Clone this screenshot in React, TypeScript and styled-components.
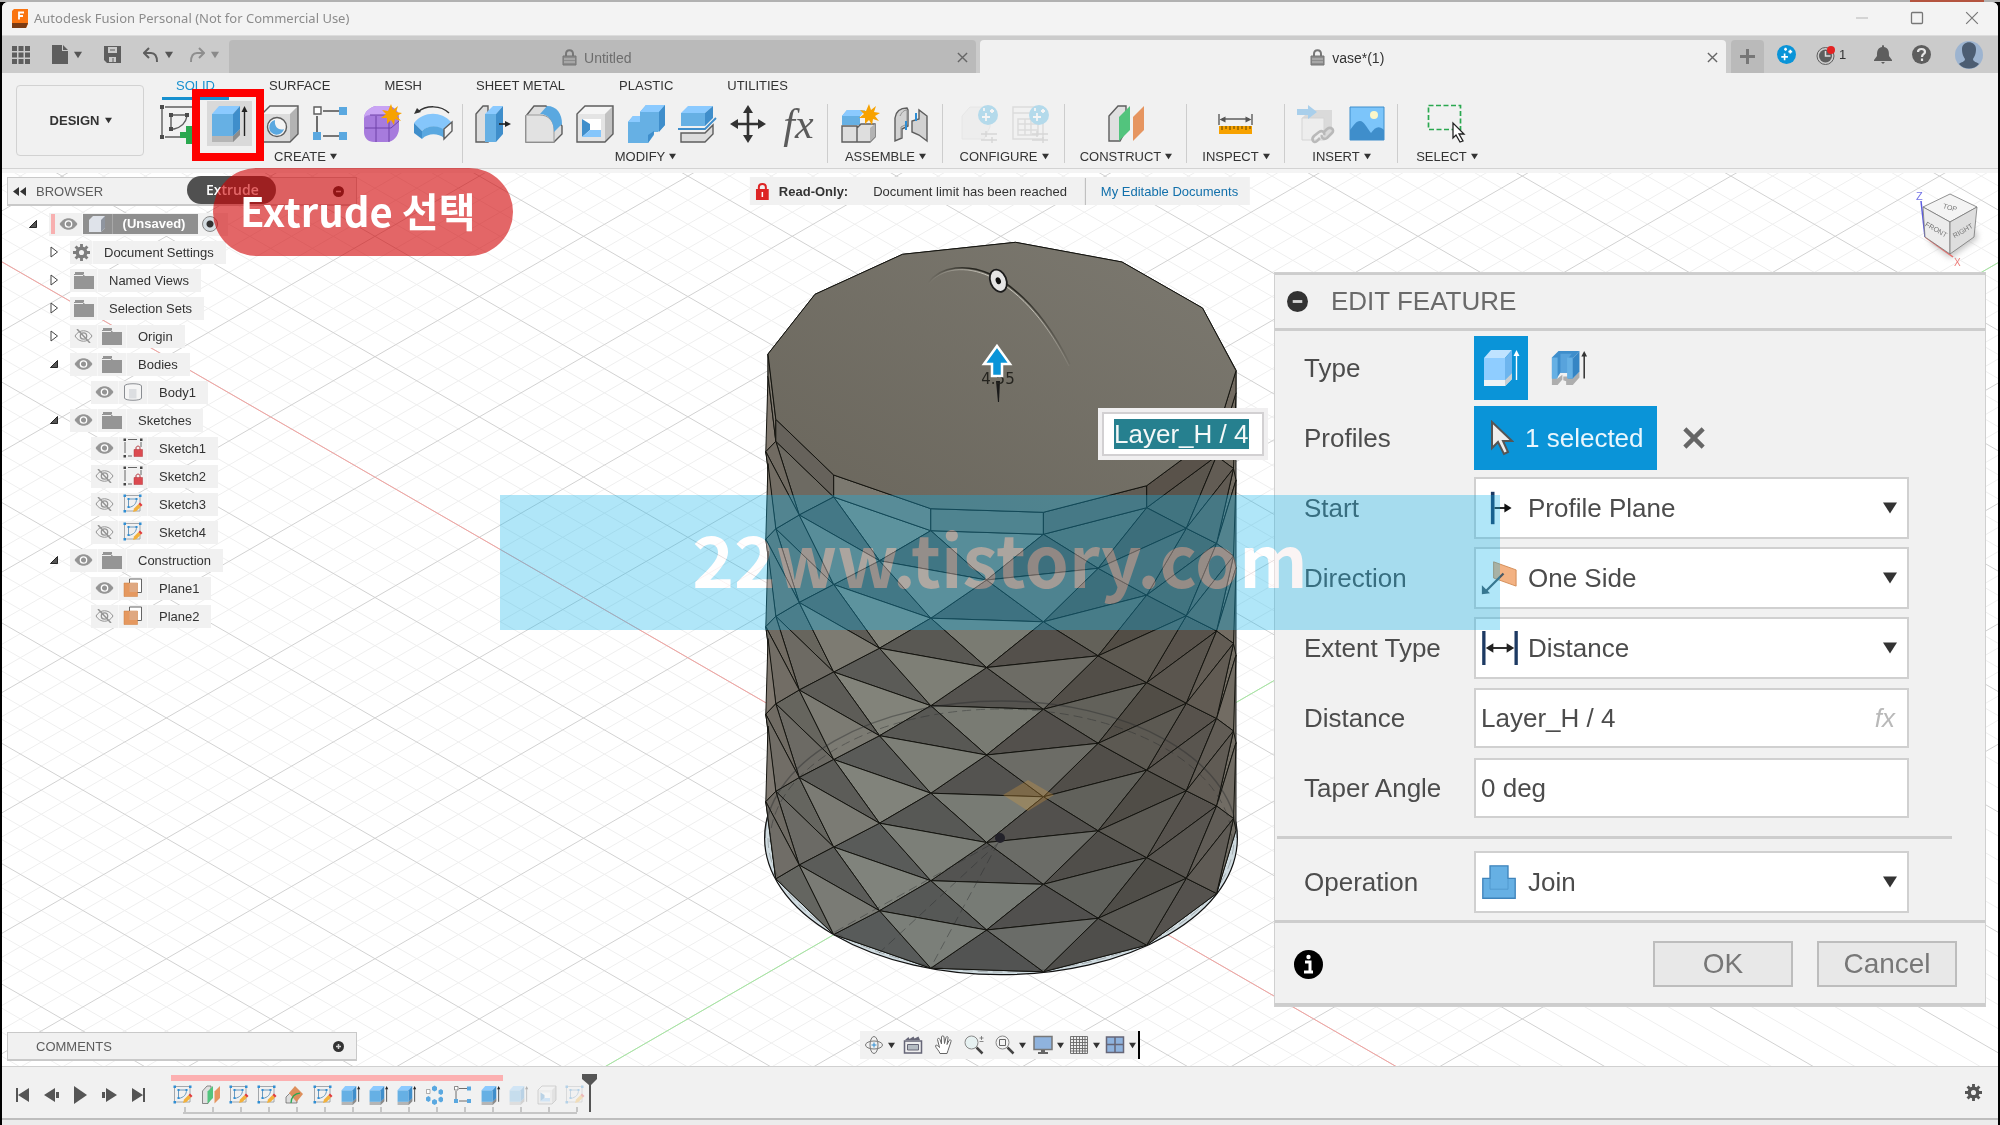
import React from "react";
import styled, { createGlobalStyle, css } from "styled-components";

const ui = `"Liberation Sans", Arial, "Noto Sans CJK KR", sans-serif`;

const GlobalStyle = createGlobalStyle`
  *, *::before, *::after { box-sizing: border-box; }
  body { margin: 0; background: #000; font-family: ${ui}; font-size: 13px; color: #333; }
  button, input, select { font: inherit; color: inherit; margin: 0; }
  button { border: 0; padding: 0; background: none; cursor: pointer; }
  svg { display: block; flex: none; }
  ul { list-style: none; margin: 0; padding: 0; }
`;

/* ---------- shell ---------- */

const Shell = styled.div`
  position: relative;
  min-height: 100vh;
  display: flex;
  flex-direction: column;
  overflow: hidden;
`;
const Backdrop = styled.div`
  height: 2px;
  display: flex;
  justify-content: flex-end;
  padding-right: 16px;
  background: #b1b1b1;
`;
const BackdropChip = styled.span`
  width: 74px;
  background: #b4543f;
`;
const Frame = styled.div`
  flex: 1;
  display: flex;
  flex-direction: column;
  margin: 0 2px;
  background: #f1f1f1;
  border-radius: 6px 6px 0 0;
`;

const TitleBar = styled.header`
  display: flex;
  align-items: center;
  height: 34px;
  padding: 0 19px 1px 10px;
  gap: 5px;
  background: #f3f3f3;
  border-bottom: 1px solid #dcdcdc;
  border-radius: 6px 6px 0 0;
`;
const AppTitle = styled.h1`
  flex: 1;
  margin: 0;
  font: 400 13px/20px "Noto Sans", sans-serif;
  color: #8c8c8c;
`;
const WindowButtons = styled.div`
  display: flex;
  gap: 41px;
`;

/* ---------- document tabs ---------- */

const TabBar = styled.div`
  display: flex;
  align-items: stretch;
  height: 37px;
  background: #cbcbcb;
`;
const QuickTools = styled.div`
  display: flex;
  align-items: center;
  width: 227px;
  padding-left: 10px;
  color: #5e5e5e;
`;
const QuickButton = styled.button<{ $w: number; $dim?: boolean }>`
  display: flex;
  align-items: center;
  gap: 6px;
  width: ${(p) => p.$w}px;
  opacity: ${(p) => (p.$dim ? 0.55 : 1)};
`;
const DocTab = styled.div<{ $active?: boolean }>`
  flex: 1;
  display: flex;
  align-items: center;
  margin-top: 4px;
  padding: 2px 8px 0;
  font-size: 14px;
  border-radius: 4px 4px 0 0;
  color: ${(p) => (p.$active ? "#333" : "#6d6d6d")};
  background: ${(p) => (p.$active ? "#f1f1f1" : "#bababa")};
  & + & { margin-left: 4px; }
`;
const DocName = styled.button`
  flex: 1;
  display: flex;
  align-items: center;
  justify-content: center;
  gap: 7px;
`;
const NewTab = styled.button`
  display: flex;
  align-items: center;
  justify-content: center;
  width: 33px;
  margin: 4px 0 0 5px;
  background: #bababa;
  border-radius: 4px 4px 0 0;
`;
const Account = styled.div`
  display: flex;
  align-items: center;
  width: 234px;
  padding-left: 13px;
`;
const AccountButton = styled.button<{ $w: number }>`
  display: flex;
  align-items: center;
  gap: 4px;
  width: ${(p) => p.$w}px;
  font-size: 13px;
`;

/* ---------- ribbon ---------- */

const Ribbon = styled.div`
  display: flex;
  height: 100px;
  padding-left: 14px;
  background: #f1f1f1;
  box-shadow: inset 0 -4px #f4f4f4, inset 0 -5px #d3d3d3;
`;
const Workspace = styled.button`
  display: flex;
  align-items: center;
  justify-content: center;
  gap: 6px;
  width: 128px;
  height: 71px;
  margin-top: 12px;
  padding-left: 2px;
  font-weight: 700;
  border: 1px solid #d2d2d2;
  border-radius: 4px;
`;
const RibbonBody = styled.div`
  display: flex;
  flex-direction: column;
`;
const RibbonTabs = styled.nav`
  display: flex;
  gap: 26px;
  margin-left: 18px;
`;
const RibbonTab = styled.button<{ $active?: boolean }>`
  height: 27px;
  padding: 0 14px;
  line-height: 26px;
  border-bottom: 3px solid ${(p) => (p.$active ? "#1790cf" : "transparent")};
  color: ${(p) => (p.$active ? "#1790cf" : "#333")};
`;
const Groups = styled.div`
  display: flex;
  padding-left: 4px;
`;
const Group = styled.section<{ $w: number }>`
  display: flex;
  flex-direction: column;
  align-items: center;
  width: ${(p) => p.$w}px;
  padding-top: 1px;
  position: relative;
  &:not(:last-child)::after {
    content: "";
    position: absolute;
    right: 0;
    top: 4px;
    width: 1px;
    height: 59px;
    background: #cdcdcd;
  }
`;
const ToolRow = styled.div`
  display: flex;
`;
const Tool = styled.button<{ $on?: boolean; $off?: boolean }>`
  display: flex;
  align-items: center;
  justify-content: center;
  width: 45px;
  height: 45px;
  margin: 0 3px;
  background: ${(p) => (p.$on ? "#d9d9d9" : "transparent")};
  opacity: ${(p) => (p.$off ? 0.3 : 1)};
`;
const GroupMenu = styled.button`
  display: flex;
  align-items: center;
  gap: 4px;
  height: 20px;
`;

/* ---------- canvas ---------- */

const Canvas = styled.main`
  position: relative;
  flex: 1;
  display: flex;
  flex-direction: column;
  justify-content: space-between;
  min-height: 892px;
  padding: 4px 0 5px 5px;
  background: #fff;
  overflow: hidden;
`;
const Scene = styled.svg`
  position: absolute;
  inset: 0;
  width: 100%;
  height: 100%;
`;
const SideColumn = styled.aside`
  position: relative;
  width: 350px;
`;
const SideBar = styled.div`
  position: relative;
  display: flex;
  align-items: center;
  width: 350px;
  height: 29px;
  padding: 0 12px 0 5px;
  gap: 10px;
  background: #f1f1f1;
  border: 1px solid #c9c9c9;
  border-bottom-width: 2px;
  color: #5c5c5c;
`;
const SideTitle = styled.h2<{ $indent?: boolean }>`
  flex: 1;
  margin: 0;
  padding-left: ${(p) => (p.$indent ? 23 : 0)}px;
  font-size: 13px;
  font-weight: 400;
`;
const Tree = styled.ul`
  display: flex;
  flex-direction: column;
  gap: 4px;
  margin-top: 6px;
`;
const Node = styled.li<{ $level: number }>`
  display: flex;
  align-items: center;
  height: 24px;
  padding-left: ${(p) => [19, 40, 84][p.$level]}px;
`;
const Twisty = styled.button`
  width: 23px;
  padding-left: 3px;
`;
const NodeBody = styled.div<{ $root?: boolean }>`
  display: flex;
  align-items: center;
  height: 23px;
  background: #f1f1f1;
  ${(p) => p.$root && css`width: 179px; padding-left: 2px;`}
`;
const Cell = styled.span<{ $w?: number }>`
  display: flex;
  align-items: center;
  justify-content: center;
  width: ${(p) => p.$w ?? 28}px;
  height: 100%;
  border-right: 1px solid #f8f8f8;
`;
const NodeName = styled.button`
  padding: 0 12px 0 11px;
  white-space: nowrap;
`;
const RootName = styled.button`
  display: flex;
  align-items: center;
  width: 115px;
  height: 20px;
  background: #8f8f8f;
  color: #fff;
  font-weight: 700;
`;
const RootLabel = styled.span`
  flex: 1;
  line-height: 20px;
  padding-right: 3px;
  margin-left: 4px;
  border-left: 1px solid #a8a8a8;
`;
const RedMark = styled.span`
  width: 4px;
  height: 20px;
  background: #f8b0b0;
`;
const ActiveRadio = styled.input`
  appearance: none;
  width: 16px;
  height: 16px;
  margin-left: 4px !important;
  border: 1px solid #888;
  border-radius: 50%;
  background: radial-gradient(circle, #333 0 3px, #d5dde2 4px);
`;
const Notice = styled.div`
  position: absolute;
  top: 4px;
  left: 50%;
  transform: translateX(-50%);
  display: flex;
  align-items: center;
  height: 28px;
  padding: 0 12px 0 6px;
  background: #f1f1f1;
  white-space: nowrap;
`;
const NoticeTitle = styled.strong`
  margin: 0 25px 0 10px;
`;
const NoticeLink = styled.a`
  margin-left: 18px;
  padding-left: 15px;
  line-height: 27px;
  border-left: 1px solid #b8b8b8;
  color: #1270ab;
  text-decoration: none;
`;
const DimensionBox = styled.label`
  position: absolute;
  left: 1096px;
  top: 235px;
  padding: 4px;
  background: #f0eff0;
`;
const DimensionInner = styled.span`
  display: flex;
  padding: 5px 13px 5px 10px;
  border: 2px solid #d2d0d2;
  background: #fff;
`;
const DimensionInput = styled.input`
  width: 135px;
  height: 30px;
  padding: 0;
  border: 0;
  background: #26808f;
  color: #f4f8f8;
  font-size: 26px;
`;
const NavBar = styled.div`
  position: absolute;
  left: 50%;
  bottom: 7px;
  transform: translateX(-50%);
  display: flex;
  align-items: center;
  height: 28px;
  padding-left: 4px;
  background: #f1f1f1;
  border-right: 2px solid #000;
`;
const NavButton = styled.button<{ $w: number }>`
  display: flex;
  align-items: center;
  gap: 4px;
  width: ${(p) => p.$w}px;
`;
const CubeBox = styled.div`
  position: absolute;
  top: 12px;
  right: 12px;
`;

/* ---------- feature dialog ---------- */

const Dialog = styled.form`
  position: absolute;
  top: 99px;
  right: 12px;
  width: 712px;
  color: #4c4c4c;
  font-size: 26px;
  background: #f1f1f1;
  border: 1px solid #d0d0d0;
`;
const DialogHead = styled.div`
  display: flex;
  align-items: center;
  gap: 23px;
  height: 58px;
  padding: 0 12px;
  border-top: 2px solid #cdcdcd;
  border-bottom: 3px solid #cdcdcd;
  color: #6a6a6a;
`;
const DialogTitle = styled.h2`
  margin: 0;
  font-size: 26px;
  font-weight: 400;
`;
const Fields = styled.div`
  display: grid;
  grid-template-columns: 170px minmax(0, 1fr);
  grid-auto-rows: 64px;
  row-gap: 6px;
  align-items: center;
  padding: 5px 76px 4px 29px;
`;
const FieldName = styled.label`
  white-space: nowrap;
`;
const Control = styled.div`
  position: relative;
  display: flex;
  align-items: center;
`;
const ControlIcon = styled.span`
  position: absolute;
  left: 7px;
  pointer-events: none;
`;
const ControlCaret = styled.span`
  position: absolute;
  right: 12px;
  pointer-events: none;
`;
const Select = styled.select`
  appearance: none;
  width: 100%;
  height: 62px;
  padding: 0 40px 0 52px;
  border: 2px solid #d0d0d0;
  border-radius: 0;
  background: #fff;
`;
const TextField = styled.input`
  width: 100%;
  height: 60px;
  padding: 0 5px;
  border: 2px solid #d0d0d0;
  background: #fff;
`;
const Fx = styled.em`
  position: absolute;
  right: 14px;
  color: #b9b9b9;
  pointer-events: none;
`;
const TypeButton = styled.button<{ $on?: boolean }>`
  display: flex;
  align-items: center;
  justify-content: center;
  width: 54px;
  height: 64px;
  margin-right: 14px;
  background: ${(p) => (p.$on ? "#0a94d8" : "transparent")};
`;
const PickButton = styled.button`
  display: flex;
  align-items: center;
  gap: 11px;
  width: 183px;
  height: 64px;
  padding-left: 16px;
  background: #0a94d8;
  color: #e9f6fd;
`;
const ClearButton = styled.button`
  margin-left: 26px;
`;
const Rule = styled.hr`
  grid-column: 1 / -1;
  width: 675px;
  height: 3px;
  margin: 12px 0 0 -27px;
  border: 0;
  background: #cdcdcd;
`;
const Operation = styled(Fields)`
  grid-auto-rows: auto;
  row-gap: 12px;
  padding-top: 0;
  padding-bottom: 7px;
`;
const DialogFoot = styled.div`
  display: flex;
  align-items: center;
  gap: 24px;
  height: 86px;
  padding: 2px 28px 0 19px;
  border-top: 3px solid #cdcdcd;
  border-bottom: 3px solid #cdcdcd;
`;
const Spacer = styled.span`
  flex: 1;
`;
const DialogButton = styled.button`
  width: 140px;
  height: 46px;
  border: 2px solid #bdbdbd;
  background: #e8e8e8;
  color: #777;
  font-size: 28px;
`;

/* ---------- timeline ---------- */

const Timeline = styled.footer`
  display: flex;
  align-items: center;
  height: 52px;
  padding: 0 16px 0 13px;
  border-top: 1px solid #d0d0d0;
  background: #f1f1f1;
`;
const Playback = styled.div`
  display: flex;
  align-items: center;
  gap: 13px;
  width: 156px;
  padding-top: 4px;
`;
const Track = styled.div`
  display: flex;
  flex-direction: column;
  margin-top: 4px;
`;
const Computed = styled.div`
  width: 332px;
  height: 6px;
  background: #fcb0b1;
`;
const Steps = styled.div`
  display: flex;
  padding-top: 4px;
`;
const Step = styled.button<{ $off?: boolean }>`
  display: flex;
  flex-direction: column;
  align-items: center;
  justify-content: space-between;
  width: 28px;
  height: 27px;
  padding-right: 5px;
  svg { opacity: ${(p) => (p.$off ? 0.3 : 1)}; }
  &::after {
    content: "";
    width: 2px;
    height: 5px;
    margin-left: 4px;
    background: #c6c6c6;
  }
`;
const Rail = styled.div`
  width: 394px;
  height: 2px;
  margin-left: 12px;
  background: #c6c6c6;
`;
const Marker = styled.svg`
  margin-left: -9px;
`;
const Bottom = styled.div`
  height: 7px;
  border-top: 2px solid #bdbdbd;
  background: #ececec;
`;

/* ---------- tutorial annotations ---------- */

const RedFrame = styled.div`
  position: absolute;
  left: 192px;
  top: 89px;
  width: 72px;
  height: 72px;
  border: 8px solid #fe0000;
  pointer-events: none;
`;
const Tooltip = styled.div`
  position: absolute;
  left: 187px;
  top: 176px;
  width: 89px;
  height: 28px;
  padding-left: 19px;
  border-radius: 14px;
  background: #505050;
  color: #fff;
  font: 600 14px/28px "Open Sans", sans-serif;
`;
const Callout = styled.div`
  position: absolute;
  left: 213px;
  top: 168px;
  width: 300px;
  height: 88px;
  padding-left: 27px;
  border-radius: 44px;
  background: rgba(208, 0, 2, 0.6);
  color: #fff;
  font: 700 40px/84px "Noto Sans CJK KR", sans-serif;
`;
const Watermark = styled.div`
  position: absolute;
  left: 25%;
  top: 44%;
  width: 50%;
  height: 12%;
  display: flex;
  align-items: center;
  justify-content: center;
  padding-bottom: 12px;
  background: rgba(15, 179, 233, 0.33);
  pointer-events: none;
`;
const WatermarkText = styled.span`
  font: 700 71px/100px "Noto Sans CJK KR", sans-serif;
  color: rgb(84, 24, 6);
  mix-blend-mode: plus-lighter;
`;

/* ---------- icons ---------- */

const Caret = ({ s = 7, c = "#333" }: { s?: number; c?: string }) => (
  <svg width={s} height={s} viewBox="0 0 10 10"><path d="M0 1h10L5 9z" fill={c} /></svg>
);

const I = ({ s = 40, children }: { s?: number; children: React.ReactNode }) => (
  <svg width={s} height={s} viewBox="0 0 40 40" fill="none">{children}</svg>
);

const ln = { stroke: "#5d5d5d", strokeWidth: 1.4 };

const Extrude = ({ s, light }: { s?: number; light?: boolean }) => (
  <I s={s}>
    <path d="M3 32h21l7-7v6l-7 7H3z" fill={light ? "#eef2f5" : "#b5b5b5"} />
    <path d="M24 32l7-7v6l-7 7z" fill={light ? "#c9ced2" : "#8c8c8c"} />
    <path d="M3 10h21v22H3z" fill={light ? "#8fcdff" : "#66b0e4"} />
    <path d="M3 10l7-8h21l-7 8z" fill={light ? "#bfe3ff" : "#8bcaff"} />
    <path d="M24 10l7-8v23l-7 7z" fill={light ? "#6db5ee" : "#3f8ecb"} />
    <path d="M35.500 6v26" stroke={light ? "#fff" : "#222"} strokeWidth="1.400" />
    <path d="M35.500 2l3 6h-6z" fill={light ? "#fff" : "#222"} />
  </I>
);
const ThinExtrude = () => (
  <I s={38}>
    <path d="M2 31h6l5-4v5l-5 6H2zM14 29h10v9h-7v-4l-3-1zM24 31l7-7v6l-7 8z" fill="#aeaeae" />
    <path d="M2 9l7-7h22l-7 8v21h-5v-6h-8l-4 6H2z" fill="#3f8ecb" />
    <path d="M11 5h12l-4 5v15h-8z" fill="#58a3dc" />
    <path d="M2 9h6v22H2z" fill="#66b0e4" /><path d="M18 9h6v22h-6z" fill="#66b0e4" /><path d="M24 10l7-8v22l-7 7z" fill="#3585c4" />
    <path d="M36 6v25" stroke="#333" strokeWidth="1.600" /><path d="M36 2l3 6h-6z" fill="#333" />
  </I>
);
const SketchNew = () => (
  <I>
    <path d="M4 5v28M7 3h29M7 33h18" {...ln} />
    <path d="M13 11h16M13 13v12h3c8-2 12-7 13-13" {...ln} />
    <path d="M2 1h4v4H2zM2 31h4v4H2zM11 9h4v4h-4zM11 23h4v4h-4zM27 9h4v4h-4z" fill="#4b4b4b" />
    <path d="M28 22h6v6h6v6h-6v6h-6v-6h-6v-6h6z" fill="#2aa84f" />
  </I>
);
const Hole = () => (
  <I>
    <path d="M2 10h28v28H2z" fill="#dcdcdc" /><path d="M2 10l8-8h28l-8 8z" fill="#f4f4f4" /><path d="M30 10l8-8v28l-8 8z" fill="#b3b3b3" />
    <path d="M2 10l8-8h28v28l-8 8H2z" {...ln} />
    <circle cx="17" cy="23" r="9.500" fill="#f4f4f4" {...ln} />
    <path d="M15 16a7.500 7.500 0 1 0 9 9c-5 2-10-2-9-9z" fill="#5aa8e0" />
  </I>
);
const RectPattern = ({ s }: { s?: number }) => (
  <I s={s}>
    <path d="M6 12v16M12 7h16M12 32h16" stroke="#4d4d4d" strokeWidth="1.600" />
    <path d="M3 3h7v7H3z" fill="#fff" {...ln} />
    <path d="M28 3h8v8h-8zM2 28h8v8H2zM28 28h8v8h-8z" fill="#5aa8e0" />
  </I>
);
const Star = () => (
  <path d="M29 0l2 6 5-4-2 6 6 1-5 3 4 5-6-2-1 6-3-5-4 4v-6l-6 0 5-4-4-4 6 1z" fill="#f7a200" />
);
const Form = () => (
  <I>
    <path d="M2 14c0-6 6-11 12-12h12c7 1 11 5 11 12v10c0 8-6 14-12 14H12C6 38 2 34 2 28z" fill="#a77bdd" />
    <path d="M2 14c0-6 6-11 12-12h12c3 1 3 5 0 9H9c-4 0-6 1-7 3z" fill="#c9a4f4" />
    <path d="M3 24h26l8-7M14 12v26M27 11v27M8 11h20l6-5" stroke="#6f43a8" strokeWidth="1" />
    <Star />
  </I>
);
const Sweep = () => (
  <I>
    <path d="M5 8C13 1 28 1 36 9" stroke="#333" strokeWidth="1.500" /><path d="M1 10l3-6 4 4z" fill="#333" />
    <path d="M1 19c10-12 27-12 37-1l-6 9c-7-6-17-6-23 0z" fill="#85c6fb" />
    <path d="M1 19l8 8v8L1 29z" fill="#3f8ecb" /><path d="M9 27c6-6 16-6 22-1v8c-6-5-16-5-22 1z" fill="#5aa8e0" />
    <path d="M31 25l8-7v9l-8 8z" fill="#f3f3f3" {...ln} />
  </I>
);
const PressPull = () => (
  <I>
    <path d="M3 10l7-8h5v36H3z" fill="#dedede" {...ln} />
    <path d="M12 10h11v28H12z" fill="#66b0e4" /><path d="M12 10l8-8h10l-7 8z" fill="#8bcaff" /><path d="M23 10l7-8v28l-7 8z" fill="#3f8ecb" />
    <path d="M26 20h9" stroke="#222" strokeWidth="1.600" /><path d="M38 20l-6-3v6z" fill="#222" />
  </I>
);
const Fillet = () => (
  <I>
    <path d="M2 12l8-10h12l16 20v8l-8 8H2z" fill="#dedede" {...ln} />
    <path d="M2 11h14c8 0 14 6 14 14v13H2z" fill="#e2e2e2" stroke="#9a9a9a" />
    <path d="M16 10l7-8c10 0 15 8 15 18l-8 8c0-10-5-18-14-18z" fill="#5aa8e0" />
  </I>
);
const ShellIcon = ({ s }: { s?: number }) => (
  <I s={s}>
    <path d="M2 10h28v28H2z" fill="#e4e4e4" /><path d="M2 10l8-8h28l-8 8z" fill="#f5f5f5" /><path d="M30 10l8-8v28l-8 8z" fill="#c2c2c2" />
    <path d="M2 10l8-8h28v28l-8 8H2z" {...ln} />
    <path d="M7 15h19v18H7z" fill="#fff" /><path d="M7 15l8 5v6l-8 7z" fill="#3f8ecb" /><path d="M7 33l8-7h11v7z" fill="#85c6fb" />
  </I>
);
const Combine = () => (
  <I>
    <path d="M2 18l5-6h7v-4l6-7h19v20l-7 7h-4v3l-6 8H2z" fill="#66b0e4" />
    <path d="M14 8l6-7h19l-6 7zM2 18l5-6h7v6z" fill="#8bcaff" />
    <path d="M33 8l6-7v20l-6 7zM22 31l6-4v3l-6 9z" fill="#3f8ecb" />
  </I>
);
const Split = () => (
  <I>
    <path d="M4 9h24v13H4z" fill="#66b0e4" /><path d="M4 9l7-7h25l-8 7z" fill="#8bcaff" /><path d="M28 9l8-7v12l-8 8z" fill="#3f8ecb" />
    <path d="M1 25h27l11-11" stroke="#3f8ecb" strokeWidth="1.800" />
    <path d="M4 29h24l8-8v9l-8 8H4z" fill="#dcdcdc" {...ln} />
  </I>
);
const Move = () => (
  <I>
    <path d="M20 6v28M6 20h28" stroke="#333" strokeWidth="2.600" />
    <path d="M20 1l5 8H15zM20 39l5-8H15zM2 20l8-5v10zM38 20l-8-5v10z" fill="#333" />
  </I>
);
const FxLabel = styled.span`
  font: italic 400 42px/40px "Liberation Serif", serif;
  color: #5b5b5b;
`;
const NewComponent = () => (
  <I>
    <path d="M2 12l5-6h18l-5 6v9H2z" fill="#66b0e4" /><path d="M2 12l5-6h18l-5 6z" fill="#8bcaff" />
    <path d="M2 22h15v16H2zM17 24l4-4h14v13l-5 5H17z" fill="#dedede" {...ln} /><path d="M30 24l5-4v13l-5 5z" fill="#b3b3b3" />
    <Star />
  </I>
);
const Joint = () => (
  <I>
    <path d="M4 14c1-7 6-10 12-10l1 2v16l-6 3v9l-7 3z" fill="#d2d2d2" {...ln} />
    <path d="M9 12c2-4 4-6 7-6v14l-6 3v11" stroke="#909090" />
    <path d="M36 37l-8-6-7-3V17l7-2V6l8 6z" fill="#d2d2d2" {...ln} />
    <path d="M15 17v9M25 9v8" stroke="#2f8ed4" strokeWidth="2" />
  </I>
);
const ConfigIcon = ({ grid }: { grid?: boolean }) => (
  <I>
    {grid ? <path d="M3 3h30v32H3zM3 9h30M8 15h20v16H8zM8 20h20M8 26h20M15 15v16M21 15v16" stroke="#aaa" strokeWidth="1.400" /> : <path d="M3 12l8-9h20v20l-6 12H3z" fill="#e6e6e6" stroke="#ccc" />}
    <circle cx="29" cy="11" r="10" fill="#2aa6e0" />
    <path d="M27 9v8M23 13h8M33 5v4M31 7h4M25 4v3" stroke="#fff" strokeWidth="1.800" />
    <path d="M22 30h16M22 36h16M27 27v6M33 33v6" stroke="#999" strokeWidth="1.400" />
  </I>
);
const Planes = ({ s }: { s?: number }) => (
  <I s={s}>
    <path d="M3 12l9-10h8v24l-6 11H3z" fill="#e0e0e0" {...ln} />
    <path d="M13 13l11-11v24L13 37z" fill="#52c47d" /><path d="M27 13L38 2v24L27 37z" fill="#e69560" />
  </I>
);
const Measure = () => (
  <I>
    <path d="M3 10v11M36 10v11M6 15h27" {...ln} /><path d="M3.500 15.500l6-3v6zM35.500 15.500l-6-3v6z" fill="#555" />
    <path d="M3 22h33v8H3z" fill="#f7a200" /><path d="M6 22v4M10 22v3M14 22v4M18 22v3M22 22v4M26 22v3M30 22v4M34 22v3" stroke="#5d4300" />
  </I>
);
const InsertLink = () => (
  <I>
    <path d="M6 14l8-8h22v22l-6 8H6z" fill="#dadada" /><path d="M6 14h22v22H6z" fill="#ededed" stroke="#d5d5d5" />
    <path d="M1 5h11V1l9 7-9 7v-4H1z" fill="#a9cfeb" />
    <path d="M24 34l-3 3c-4 3-6-2-3-5l5-4c3-2 6 0 5 3M27 29l4-4c4-3 8 1 5 4l-5 5c-3 2-6 0-5-3" stroke="#b9b9b9" strokeWidth="2.600" />
  </I>
);
const Picture = () => (
  <I>
    <path d="M3 3h34v33H3z" fill="#7cc5fa" stroke="#3f8ecb" /><circle cx="27" cy="11" r="4" fill="#fcf7c8" />
    <path d="M3 26c4-5 6-9 10-9s7 7 11 12c4-6 8-8 13-3v10H3z" fill="#3f8ecb" />
  </I>
);
const SelectIcon = () => (
  <I>
    <path d="M1.500 1.500h32v24h-32z" stroke="#2aa84f" strokeWidth="1.700" strokeDasharray="5 2.500" />
    <path d="M26 19v15l3-3 4 7 3-1-4-7h5z" fill="#fff" stroke="#222" strokeWidth="1.300" />
  </I>
);
const SketchEdit = ({ s = 20 }: { s?: number }) => (
  <I s={s}>
    <path d="M3 3h31v31H3z" stroke="#9a9ea3" strokeWidth="1.800" />
    <path d="M11 10h16c0 9-5 15-16 17z" stroke="#5b8fb8" strokeWidth="1.800" />
    <path d="M1 1h5v5H1zM32 1h5v5h-5zM1 32h5v5H1zM9 8h4v4H9zM9 24h4v4H9zM25 8h4v4h-4z" fill="#2f8ed4" />
    <path d="M20 36l2-7 9-9 5 5-9 9z" fill="#f3b13c" /><path d="M31 20l3-3 5 5-3 3z" fill="#e23b3b" />
  </I>
);
const SketchLocked = () => (
  <I s={20}>
    <path d="M4 8v22M10 3h18M36 8v10M10 36h8" stroke="#666" strokeWidth="2" />
    <path d="M1 1h5v5H1zM34 1h5v5h-5zM1 34h5v5H1z" fill="#444" />
    <path d="M26 24v-4c0-5 8-5 8 0v4" stroke="#b3343a" strokeWidth="2" /><path d="M22 23h17v14H22z" fill="#dc4a50" stroke="#b3343a" />
  </I>
);
const PlaneIcon = () => (
  <I s={20}><path d="M13 2h24v27H26V13H13z" fill="#fff" stroke="#666" strokeWidth="2" /><path d="M2 10h27v27H2z" fill="#e5985f" stroke="#cf7c3d" /><path d="M13 10h16v18H13z" fill="#dfa881" /></I>
);
const BodyIcon = () => (
  <I s={20}><path d="M3 8c0-6 34-6 34 0v24c0 6-34 6-34 0z" fill="#f5f5f5" stroke="#8a8d92" strokeWidth="2" /><path d="M12 14h15v19H12z" fill="#dcdee1" /></I>
);
const Folder = () => (
  <svg width="20" height="17" viewBox="0 0 20 17"><path d="M0 2h9l2 2h9v13H0z" fill="#959595" /><path d="M1 0h9v2H1z" fill="#959595" /><path d="M0 3.500h9" stroke="#f1f1f1" /></svg>
);
const Gear = ({ s = 17, c = "#7d7d7d" }: { s?: number; c?: string }) => (
  <svg width={s} height={s} viewBox="0 0 20 20">
    <circle cx="10" cy="10" r="5" fill="none" stroke={c} strokeWidth="4" />
    <path d="M10 0v4M10 16v4M0 10h4M16 10h4M3 3l3 3M14 14l3 3M17 3l-3 3M6 14l-3 3" stroke={c} strokeWidth="3.400" />
  </svg>
);
const Eye = ({ off }: { off?: boolean }) => (
  <svg width="19" height="14" viewBox="0 0 19 14">
    <path d="M1 7c4-7 13-7 17 0-4 7-13 7-17 0z" fill={off ? "none" : "#949494"} stroke="#949494" />
    <circle cx="9.500" cy="7" r="3.200" fill={off ? "none" : "#949494"} stroke={off ? "#949494" : "#fff"} strokeWidth="1.300" />
    {off && <path d="M3 0l13 14" stroke="#949494" strokeWidth="1.500" />}
  </svg>
);
const Open = () => <svg width="8" height="8" viewBox="0 0 9 9"><path d="M8.500.500v8h-8z" fill="#555" stroke="#111" /></svg>;
const Closed = () => <svg width="9" height="12" viewBox="0 0 9 12"><path d="M1 1l6.500 5L1 11z" fill="#fff" stroke="#444" /></svg>;
const Disc = ({ s = 11, plus }: { s?: number; plus?: boolean }) => (
  <svg width={s} height={s} viewBox="0 0 22 22">
    <circle cx="11" cy="11" r="11" fill="#333" /><path d="M6 11h10" stroke="#d5d5d5" strokeWidth="3" />{plus && <path d="M11 6v10" stroke="#d5d5d5" strokeWidth="3" />}
  </svg>
);
const Lock = () => (
  <svg width="15" height="17" viewBox="0 0 15 17"><path d="M4 8V5c0-5 7-5 7 0v3" fill="none" stroke="#777" strokeWidth="2" /><path d="M1 7h13v9H1z" fill="#8c8c8c" stroke="#747474" /><path d="M2 10h11M2 13h11" stroke="#c2c2c2" /></svg>
);
const RedLock = () => (
  <svg width="13" height="17" viewBox="0 0 13 17"><path d="M3 7V4c0-4 7-4 7 0v3" fill="none" stroke="#dd2525" strokeWidth="2" /><path d="M0 6h13v11H0z" fill="#dd2525" /><path d="M6.500 9v5" stroke="#fff" strokeWidth="1.500" /></svg>
);
const Cross = ({ s, w = 2, c = "#666" }: { s: number; w?: number; c?: string }) => (
  <svg width={s} height={s} viewBox="0 0 12 12"><path d="M1 1l10 10M11 1L1 11" stroke={c} strokeWidth={w} /></svg>
);
const Cursor = () => (
  <svg width="24" height="36" viewBox="0 0 24 36"><path d="M2 2v26l6-6 6 12 4-2-5-11h9z" fill="#eee" stroke="#555" strokeWidth="2" /></svg>
);
const AppLogo = () => (
  <svg width="17" height="19" viewBox="0 0 17 19"><path d="M2 0h14v15l-2 4H0V2z" fill="#fa7410" /><path d="M0 14h16l-2 5H0z" fill="#7b3a12" /><path d="M7 10.500V3.500h5M7 7h4" fill="none" stroke="#fff" strokeWidth="1.800" /></svg>
);

/* ---------- model ---------- */

type P = [number, number];
const RING = 87.5;
const rimA: P[] = [[768, 354], [775.8, 419.3], [833.7, 475], [930.8, 508.7], [1043.4, 512.3], [1146.7, 485.7], [1216.6, 434], [1236, 370.7]];
const backRim: P[] = [[1202.5, 308], [1122, 262], [1015.5, 242.3], [902.5, 254.3], [815, 294.3]];
const colB: P[] = [[765.8, 451.7], [799.2, 515], [879.5, 560.7], [986.6, 580], [1098.1, 568.3], [1186.3, 528.3], [1233.5, 468.5]];
const a = (i: number, k: number): P => [rimA[i][0], rimA[i][1] + 22 + RING * k];
const b = (i: number, k: number): P => [colB[i][0], colB[i][1] + RING * k];

const lightStops: [number, number[]][] = [[770, [130, 122, 112]], [785, [108, 103, 95]], [812, [110, 108, 100]], [850, [132, 131, 121]], [880, [131, 131, 121]], [985, [123, 123, 114]], [1040, [110, 109, 101]], [1100, [98, 96, 88]], [1160, [91, 87, 78]], [1205, [90, 84, 76]], [1232, [118, 111, 101]]];
const darkStops: [number, number[]][] = [[768, [134, 127, 117]], [782, [110, 104, 95]], [800, [104, 102, 94]], [835, [94, 92, 86]], [900, [91, 91, 86]], [985, [86, 83, 78]], [1100, [83, 78, 71]], [1160, [81, 76, 68]], [1210, [96, 90, 82]], [1232, [120, 113, 103]]];

const shade = (stops: [number, number[]][], x: number, y: number) => {
  let j = 1;
  while (j < stops.length - 1 && stops[j][0] < x) j++;
  const [x0, c0] = stops[j - 1];
  const [x1, c1] = stops[j];
  const t = Math.min(1, Math.max(0, (x - x0) / (x1 - x0)));
  const g = Math.max(0, (y - 620) / 350) * 4;
  const shift = [-g, 0, g];
  return `rgb(${c0.map((v, n) => Math.round(v + (c1[n] - v) * t + shift[n])).join(",")})`;
};
const pts = (p: P[]) => p.map((q) => q.join(",")).join(" ");

const faces: { p: P[]; light: boolean }[] = [];
for (let k = 0; k < 5; k++) {
  for (let i = 0; i < 7; i++) {
    faces.push({ p: [a(i, k), a(i + 1, k), b(i, k)], light: true });
    faces.push({ p: [a(i, k + 1), a(i + 1, k + 1), b(i, k)], light: false });
    if (i > 0) {
      faces.push({ p: [b(i - 1, k), b(i, k), a(i, k)], light: false });
      faces.push({ p: [b(i - 1, k), b(i, k), a(i, k + 1)], light: true });
    }
  }
}
const bandColors = ["#7f796f", "#66625b", "#7c7970", "#6f6d65", "#615d55", "#59524a", "#726b61"];
const hull: P[] = [...rimA.map((_, i) => a(i, 5)), [1236, 370], ...backRim, [768, 354]];

const STEP = 41.72;
const SLOPE = 0.5772;
const gridLines: { d: string; major: boolean }[] = [];
for (let n = -60; n <= 60; n++) {
  const x = 270.7 + n * STEP;
  const y = 296.5;
  const line = (dir: number) => `M${x - 2400} ${y - 2400 * SLOPE * dir}L${x + 2400} ${y + 2400 * SLOPE * dir}`;
  gridLines.push({ d: line(1), major: n % 5 === 0 }, { d: line(-1), major: n % 5 === 0 });
}

const ModelScene = () => (
  <Scene viewBox="2 173 1996 893" preserveAspectRatio="xMidYMin slice" aria-hidden="true">
    <defs>
      <linearGradient id="lid" x1="0" y1="1" x2="1" y2="0"><stop offset="0" stopColor="#6a665c" /><stop offset="1" stopColor="#7c7970" /></linearGradient>
      <linearGradient id="arc" gradientUnits="userSpaceOnUse" x1="928" y1="0" x2="1074" y2="0"><stop offset="0" stopColor="#26251f" stopOpacity="0" /><stop offset=".3" stopColor="#26251f" /><stop offset=".6" stopColor="#26251f" /><stop offset="1" stopColor="#26251f" stopOpacity="0" /></linearGradient>
      <linearGradient id="arcGlow" gradientUnits="userSpaceOnUse" x1="928" y1="0" x2="1074" y2="0"><stop offset="0" stopColor="#c8c5bb" stopOpacity="0" /><stop offset=".4" stopColor="#c8c5bb" /><stop offset=".7" stopColor="#c8c5bb" /><stop offset="1" stopColor="#c8c5bb" stopOpacity="0" /></linearGradient>
    </defs>
    <g fill="none" strokeWidth="1">
      {gridLines.filter((g) => !g.major).map((g, i) => <path key={i} d={g.d} stroke="#efefef" />)}
      {gridLines.filter((g) => g.major).map((g, i) => <path key={i} d={g.d} stroke="#d2d2d2" />)}
      <path d="M0 260.800L2000 1415" stroke="#f5a3a0" />
      <path d="M2000 261.600L400 1185" stroke="#a5eaa0" />
    </g>
    <ellipse cx="1001" cy="838" rx="236.400" ry="136.700" fill="#cfdbe0" stroke="#111" strokeWidth="1.200" />
    <polygon points={pts(hull)} fill="#79746a" stroke="#222" />
    <g stroke="#14140f" strokeWidth="1" strokeLinejoin="round">
      {faces.map((f, i) => {
        const cx = (f.p[0][0] + f.p[1][0] + f.p[2][0]) / 3;
        const cy = (f.p[0][1] + f.p[1][1] + f.p[2][1]) / 3;
        return <polygon key={i} points={pts(f.p)} fill={shade(f.light ? lightStops : darkStops, cx, cy)} />;
      })}
      {bandColors.map((c, i) => <polygon key={i} points={pts([rimA[i], rimA[i + 1], a(i + 1, 0), a(i, 0)])} fill={c} />)}
      <polygon points={pts([...rimA, ...backRim])} fill="url(#lid)" />
    </g>
    <g fill="none" stroke="#26282a" opacity=".4">
      <path d="M765 838A236 137 0 0 1 1237 838" strokeWidth="1.500" />
      <path d="M770 842A231 133 0 0 1 1232 842" strokeDasharray="9 5" />
      <path d="M998 843L931 967M998 843L879 953M990 845L833 933" strokeDasharray="9 5" />
    </g>
    <path d="M768 838A233 134 0 0 0 1234 838" fill="none" stroke="#222" strokeDasharray="10 5" opacity=".25" />
    <path d="M1003 795l25-15 26 15-26 16z" fill="#d99a3c" opacity=".3" />
    <circle cx="1000" cy="838" r="5" fill="#23222a" />
    <path d="M928 283c13-18 40-19 62-9 34 17 60 50 80 90" fill="none" stroke="url(#arc)" strokeWidth="1.500" />
    <path d="M928 285c13-18 39-19 61-9 34 17 60 50 80 90" fill="none" stroke="url(#arcGlow)" strokeWidth="1" />
    <g transform="rotate(-22 998.3 280.7)"><ellipse cx="998.300" cy="280.700" rx="8" ry="11.500" fill="#e4e4e4" stroke="#1c1c1c" strokeWidth="1.800" /><ellipse cx="998.300" cy="280.700" rx="2.500" ry="3.500" fill="#111" /></g>
    <path d="M996 381h4l-1 21h-1z" fill="#1a1a1a" />
    <text x="998" y="384" fontFamily="DejaVu Sans" fontSize="15" fill="#25241f" textAnchor="middle">4.55</text>
    <path d="M997 346l13 18h-8v12h-10v-12h-8z" fill="#0a94d8" stroke="#fff" strokeWidth="2.500" />
  </Scene>
);

const ViewCube = () => (
  <svg width="74" height="84" viewBox="1912 185 74 84" role="img" aria-label="View cube">
    <defs><filter id="soft" x="-30%" y="-30%" width="160%" height="160%"><feGaussianBlur stdDeviation="3" /></filter></defs>
    <path d="M1928 240l22 18 28-20-4-10z" fill="#999" opacity=".6" filter="url(#soft)" />
    <path d="M1921 201l4 36" stroke="#5c5ce0" strokeWidth="1.500" /><path d="M1925 237l28 20" stroke="#e8716e" strokeWidth="1.500" />
    <g stroke="#777" strokeWidth=".8">
      <path d="M1923 207l27-13 27 13-27 15z" fill="#f4f4f4" /><path d="M1923 207l27 15v32l-25-17z" fill="#ececec" /><path d="M1977 207l-27 15v32l24-17z" fill="#dedede" />
    </g>
    <g fontFamily="Liberation Sans" fontSize="7" fill="#777" textAnchor="middle">
      <text x="1950" y="210" transform="rotate(15 1950 208)">TOP</text>
      <text x="1936" y="232" transform="rotate(30 1936 230)">FRONT</text>
      <text x="1963" y="233" transform="rotate(-30 1963 231)">RIGHT</text>
    </g>
    <text x="1916" y="200" fontFamily="Liberation Sans" fontSize="11" fill="#7474e6">Z</text>
    <text x="1954" y="266" fontFamily="Liberation Sans" fontSize="10" fill="#ee7d7a">X</text>
  </svg>
);

/* ---------- data ---------- */

const groups: { name: string; w: number; tools: { label: string; icon: React.ReactNode; on?: boolean; off?: boolean }[] }[] = [
  { name: "CREATE", w: 315, tools: [{ label: "Create Sketch", icon: <SketchNew /> }, { label: "Extrude", icon: <Extrude />, on: true }, { label: "Hole", icon: <Hole /> }, { label: "Rectangular Pattern", icon: <RectPattern /> }, { label: "Create Form", icon: <Form /> }, { label: "Sweep", icon: <Sweep /> }] },
  { name: "MODIFY", w: 365, tools: [{ label: "Press Pull", icon: <PressPull /> }, { label: "Fillet", icon: <Fillet /> }, { label: "Shell", icon: <ShellIcon /> }, { label: "Combine", icon: <Combine /> }, { label: "Split Body", icon: <Split /> }, { label: "Move", icon: <Move /> }, { label: "Change Parameters", icon: <FxLabel>fx</FxLabel> }] },
  { name: "ASSEMBLE", w: 115, tools: [{ label: "New Component", icon: <NewComponent /> }, { label: "Joint", icon: <Joint /> }] },
  { name: "CONFIGURE", w: 122, tools: [{ label: "Configure", icon: <ConfigIcon />, off: true }, { label: "Configuration Table", icon: <ConfigIcon grid />, off: true }] },
  { name: "CONSTRUCT", w: 122, tools: [{ label: "Offset Plane", icon: <Planes /> }] },
  { name: "INSPECT", w: 98, tools: [{ label: "Measure", icon: <Measure /> }] },
  { name: "INSERT", w: 113, tools: [{ label: "Insert Derive", icon: <InsertLink /> }, { label: "Canvas", icon: <Picture /> }] },
  { name: "SELECT", w: 98, tools: [{ label: "Select", icon: <SelectIcon /> }] },
];

type Item = { level: 1 | 2; name: string; open?: boolean; eye?: "on" | "off"; icon: React.ReactNode };
const items: Item[] = [
  { level: 1, name: "Document Settings", open: false, icon: <Gear /> },
  { level: 1, name: "Named Views", open: false, icon: <Folder /> },
  { level: 1, name: "Selection Sets", open: false, icon: <Folder /> },
  { level: 1, name: "Origin", open: false, eye: "off", icon: <Folder /> },
  { level: 1, name: "Bodies", open: true, eye: "on", icon: <Folder /> },
  { level: 2, name: "Body1", eye: "on", icon: <BodyIcon /> },
  { level: 1, name: "Sketches", open: true, eye: "on", icon: <Folder /> },
  { level: 2, name: "Sketch1", eye: "on", icon: <SketchLocked /> },
  { level: 2, name: "Sketch2", eye: "off", icon: <SketchLocked /> },
  { level: 2, name: "Sketch3", eye: "off", icon: <SketchEdit /> },
  { level: 2, name: "Sketch4", eye: "off", icon: <SketchEdit /> },
  { level: 1, name: "Construction", open: true, eye: "on", icon: <Folder /> },
  { level: 2, name: "Plane1", eye: "on", icon: <PlaneIcon /> },
  { level: 2, name: "Plane2", eye: "off", icon: <PlaneIcon /> },
];

const CircPattern = () => (
  <I s={20}>
    <path d="M19 1l5 3v6l-5 3-5-3V4zM32 8l4 3v6l-4 3-5-3v-6zM32 23l4 3v6l-4 3-5-3v-6zM19 28l5 3v6l-5 3-5-3v-6zM7 22l4 3v6l-4 3-5-3v-6z" fill="#5aa8e0" />
    <path d="M3 9h7v8H3z" fill="#fff" stroke="#666" />
  </I>
);
const AnglePlane = () => (
  <I s={20}><path d="M2 24l8-8h14v20H2z" fill="#ddd" {...ln} /><path d="M20 2l16 16-13 16L8 16z" fill="#dd8f5c" /><path d="M12 36c0-12 8-20 18-20" stroke="#2aa84f" strokeWidth="2.500" /></I>
);
const steps: { label: string; icon: React.ReactNode; off?: boolean }[] = [
  { label: "Sketch 1", icon: <SketchEdit /> }, { label: "Plane 1", icon: <Planes s={20} /> }, { label: "Sketch 2", icon: <SketchEdit /> }, { label: "Sketch 3", icon: <SketchEdit /> },
  { label: "Plane 2", icon: <AnglePlane /> }, { label: "Sketch 4", icon: <SketchEdit /> }, { label: "Extrude 1", icon: <Extrude s={21} /> }, { label: "Extrude 2", icon: <Extrude s={21} /> },
  { label: "Extrude 3", icon: <Extrude s={21} /> }, { label: "Circular Pattern", icon: <CircPattern /> }, { label: "Rectangular Pattern", icon: <RectPattern s={20} /> }, { label: "Extrude 4", icon: <Extrude s={21} /> },
  { label: "Extrude 5", icon: <Extrude s={21} />, off: true }, { label: "Shell", icon: <ShellIcon s={20} />, off: true }, { label: "Sketch 5", icon: <SketchEdit />, off: true },
];

const nav: { label: string; w: number; caret?: boolean; icon: React.ReactNode }[] = [
  { label: "Orbit", w: 39, caret: true, icon: <I s={20}><ellipse cx="20" cy="20" rx="17" ry="8" stroke="#777" strokeWidth="2" /><ellipse cx="20" cy="20" rx="8" ry="17" stroke="#777" strokeWidth="2" /><path d="M20 15v10M15 20h10" stroke="#2f8ed4" strokeWidth="2" /></I> },
  { label: "Look At", w: 31, icon: <I s={20}><path d="M3 12h34v24H3z" fill="#eee" stroke="#667" strokeWidth="3" /><path d="M9 19h22v11H9z" fill="#b5bcc2" stroke="#667" strokeWidth="2" /><path d="M4 10l7-6 2 4 8-5 2 4 8-4 3 7z" fill="#667" /></I> },
  { label: "Pan", w: 30, icon: <I s={20}><path d="M12 37c-2-6-9-12-9-15s4-2 8 3L7 9c0-3 4-3 5 0l3 9V4c0-3 5-3 5 0l1 13 3-12c1-3 5-2 4 1l-2 13 4-8c2-3 5-1 4 2l-6 18-2 6z" fill="#fff" stroke="#666" strokeWidth="2" /></I> },
  { label: "Zoom", w: 31, icon: <I s={20}><circle cx="15" cy="15" r="13" fill="#e6f1f1" stroke="#888" strokeWidth="2" /><path d="M25 25l12 12" stroke="#444" strokeWidth="5" /><path d="M31 6h8M35 2v8M31 13h8" stroke="#666" strokeWidth="1.500" /></I> },
  { label: "Zoom Window", w: 38, caret: true, icon: <I s={20}><circle cx="15" cy="15" r="13" fill="#f3f3f3" stroke="#888" strokeWidth="2" /><path d="M9 9h12v12H9z" stroke="#666" strokeWidth="2" /><path d="M25 25l12 12" stroke="#444" strokeWidth="5" /></I> },
  { label: "Display Settings", w: 36, caret: true, icon: <I s={20}><path d="M2 3h36v26H2z" fill="#8fb3de" stroke="#777" strokeWidth="3" /><path d="M16 30h8v4h6v4H10v-4h6z" fill="#666" /></I> },
  { label: "Grid and Snaps", w: 36, caret: true, icon: <I s={20}><path d="M3 3h34v34H3zM9 3v34M15 3v34M21 3v34M27 3v34M32 3v34M3 9h34M3 15h34M3 21h34M3 27h34M3 32h34" fill="#eee" stroke="#666" strokeWidth="1.800" /></I> },
  { label: "Viewports", w: 33, caret: true, icon: <I s={20}><path d="M3 4h34v31H3z" fill="#8fb3de" stroke="#667" strokeWidth="3" /><path d="M20 4v31M3 19h34" stroke="#667" strokeWidth="3" /></I> },
];

const DropDown = ({ id, value, icon }: { id: string; value: string; icon: React.ReactNode }) => (
  <Control>
    <Select id={id} defaultValue={value}><option>{value}</option></Select>
    <ControlIcon>{icon}</ControlIcon>
    <ControlCaret><Caret s={14} /></ControlCaret>
  </Control>
);

/* ---------- page ---------- */

export default function App() {
  return (
    <Shell>
      <GlobalStyle />
      <Backdrop><BackdropChip /></Backdrop>
      <Frame>
        <TitleBar>
          <AppLogo />
          <AppTitle>Autodesk Fusion Personal (Not for Commercial Use)</AppTitle>
          <WindowButtons>
            <button aria-label="Minimize"><svg width="14" height="14" viewBox="0 0 14 14"><path d="M1 7h12" stroke="#b5b5b5" /></svg></button>
            <button aria-label="Maximize"><svg width="14" height="14" viewBox="0 0 14 14"><rect x="1.500" y="1.500" width="11" height="11" rx="1" fill="none" stroke="#777" strokeWidth="1.300" /></svg></button>
            <button aria-label="Close"><Cross s={14} w={1} c="#777" /></button>
          </WindowButtons>
        </TitleBar>

        <TabBar>
          <QuickTools>
            <QuickButton $w={40} aria-label="Data panel"><svg width="18" height="18" viewBox="0 0 18 18" fill="currentColor"><path d="M0 0h5v5H0zM6.500 0h5v5h-5zM13 0h5v5h-5zM0 6.500h5v5H0zM6.500 6.500h5v5h-5zM13 6.500h5v5h-5zM0 13h5v5H0zM6.500 13h5v5h-5zM13 13h5v5h-5z" /></svg></QuickButton>
            <QuickButton $w={52} aria-label="File"><svg width="16" height="19" viewBox="0 0 16 19"><path d="M0 0h10v6h6v13H0zM11 0l5 5h-5z" fill="currentColor" /></svg><Caret s={8} c="#555" /></QuickButton>
            <QuickButton $w={39} aria-label="Save"><svg width="17" height="17" viewBox="0 0 17 17"><path d="M0 0h17v17H3l-3-3z" fill="currentColor" /><path d="M4 1h9v6H4zM5 11h7v5H5z" fill="#cbcbcb" /><path d="M6 4h5M9 12v4" stroke="currentColor" /></svg></QuickButton>
            <QuickButton $w={46} aria-label="Undo"><svg width="16" height="16" viewBox="0 0 16 16"><path d="M6 1L1 6l5 5M1 6h7c5 0 6 4 6 9" fill="none" stroke="currentColor" strokeWidth="2" /></svg><Caret s={8} c="#555" /></QuickButton>
            <QuickButton $w={38} $dim aria-label="Redo"><svg width="16" height="16" viewBox="0 0 16 16"><path d="M10 1l5 5-5 5M15 6H8C3 6 2 10 2 15" fill="none" stroke="currentColor" strokeWidth="2" /></svg><Caret s={8} c="#555" /></QuickButton>
          </QuickTools>
          <DocTab>
            <DocName><Lock />Untitled</DocName>
            <button aria-label="Close Untitled"><Cross s={11} w={1.5} /></button>
          </DocTab>
          <DocTab $active>
            <DocName><Lock />vase*(1)</DocName>
            <button aria-label="Close vase"><Cross s={11} w={1.5} /></button>
          </DocTab>
          <NewTab aria-label="New tab"><svg width="15" height="15" viewBox="0 0 15 15"><path d="M7.500 0v15M0 7.500h15" stroke="#777" strokeWidth="3" /></svg></NewTab>
          <Account>
            <AccountButton $w={39} aria-label="Assistant"><svg width="19" height="19" viewBox="0 0 20 20"><circle cx="10" cy="10" r="10" fill="#0a94d8" /><path d="M8 9v7M4.500 12.500h7M14 5v4M12 7h4M9 3v3M7.500 4.500h3" stroke="#fff" strokeWidth="1.700" /></svg></AccountButton>
            <AccountButton $w={58} aria-label="Jobs"><svg width="19" height="20" viewBox="0 0 19 20"><circle cx="9.500" cy="11" r="8.500" fill="none" stroke="#5e5e5e" /><circle cx="9.500" cy="11" r="6.500" fill="#5e5e5e" /><path d="M9.500 6v5h5" fill="none" stroke="#ddd" strokeWidth="1.500" /><circle cx="15" cy="5" r="4" fill="#e32222" /></svg>1</AccountButton>
            <AccountButton $w={38} aria-label="Notifications"><svg width="18" height="19" viewBox="0 0 18 19"><path d="M9 0c1 0 1 1 1 2 5 1 5 5 5 9l3 4v1H0v-1l3-4c0-4 0-8 5-9 0-1 0-2 1-2zM7 17h4l-2 2z" fill="#5e5e5e" /></svg></AccountButton>
            <AccountButton $w={43} aria-label="Help"><svg width="19" height="19" viewBox="0 0 19 19"><circle cx="9.500" cy="9.500" r="9.500" fill="#5e5e5e" /><path d="M6 7c0-4 7-4 7 0 0 2-3 2-3 5M10 13.500v2.500" fill="none" stroke="#e5e5e5" strokeWidth="2.200" /></svg></AccountButton>
            <AccountButton $w={28} aria-label="Profile"><svg width="28" height="28" viewBox="0 0 28 28"><circle cx="14" cy="14" r="14" fill="#9db4d0" /><path d="M7 8c0-9 14-9 14 0 0 6-2 8-3 10 0 3 4 3 6 5-5 6-15 6-20 0 2-2 6-2 6-5-1-2-3-4-3-10z" fill="#4c5d72" /></svg></AccountButton>
          </Account>
        </TabBar>

        <Ribbon>
          <Workspace>DESIGN <Caret /></Workspace>
          <RibbonBody>
            <RibbonTabs>
              {["SOLID", "SURFACE", "MESH", "SHEET METAL", "PLASTIC", "UTILITIES"].map((t, i) => <RibbonTab key={t} $active={i === 0}>{t}</RibbonTab>)}
            </RibbonTabs>
            <Groups>
              {groups.map((g) => (
                <Group key={g.name} $w={g.w}>
                  <ToolRow>{g.tools.map((t) => <Tool key={t.label} $on={t.on} $off={t.off} aria-label={t.label}>{t.icon}</Tool>)}</ToolRow>
                  <GroupMenu>{g.name}<Caret /></GroupMenu>
                </Group>
              ))}
            </Groups>
          </RibbonBody>
        </Ribbon>

        <Canvas>
          <ModelScene />
          <SideColumn>
            <SideBar>
              <svg width="13" height="9" viewBox="0 0 13 9"><path d="M6 0v9L0 4.500zM13 0v9L7 4.500z" fill="#333" /></svg>
              <SideTitle>BROWSER</SideTitle>
              <Disc />
            </SideBar>
            <Tree>
              <Node $level={0}>
                <Twisty aria-label="Collapse"><Open /></Twisty>
                <NodeBody $root>
                  <RedMark />
                  <Cell><Eye /></Cell>
                  <RootName>
                    <svg width="25" height="16" viewBox="0 0 25 16"><path d="M6 4l4-4h12v12l-4 4H6z" fill="#dfe3ea" /><path d="M18 4l4-4v12l-4 4z" fill="#8f959f" /></svg>
                    <RootLabel>(Unsaved)</RootLabel>
                  </RootName>
                  <ActiveRadio type="radio" defaultChecked aria-label="Activate component" />
                </NodeBody>
              </Node>
              {items.map((it) => (
                <Node key={it.name} $level={it.level}>
                  {it.level === 1 && <Twisty aria-label={it.open ? "Collapse" : "Expand"}>{it.open ? <Open /> : <Closed />}</Twisty>}
                  <NodeBody>
                    {it.eye && <Cell><Eye off={it.eye === "off"} /></Cell>}
                    <Cell $w={it.name === "Document Settings" ? 23 : it.eye ? 29 : 28}>{it.icon}</Cell>
                    <NodeName>{it.name}</NodeName>
                  </NodeBody>
                </Node>
              ))}
            </Tree>
          </SideColumn>

          <SideBar>
            <SideTitle $indent>COMMENTS</SideTitle>
            <Disc plus />
          </SideBar>

          <Notice>
            <RedLock /><NoticeTitle>Read-Only:</NoticeTitle>Document limit has been reached
            <NoticeLink href="#documents">My Editable Documents</NoticeLink>
          </Notice>

          <DimensionBox><DimensionInner><DimensionInput aria-label="Extrude distance" defaultValue="Layer_H / 4" /></DimensionInner></DimensionBox>
          <CubeBox><ViewCube /></CubeBox>

          <NavBar>
            {nav.map((n) => <NavButton key={n.label} $w={n.w} aria-label={n.label}>{n.icon}{n.caret && <Caret />}</NavButton>)}
          </NavBar>

          <Dialog onSubmit={(e) => e.preventDefault()}>
            <DialogHead><Disc s={21} /><DialogTitle>EDIT FEATURE</DialogTitle></DialogHead>
            <Fields>
              <FieldName as="span">Type</FieldName>
              <Control><TypeButton type="button" $on aria-label="Extrude"><Extrude s={40} light /></TypeButton><TypeButton type="button" aria-label="Thin extrude"><ThinExtrude /></TypeButton></Control>
              <FieldName as="span">Profiles</FieldName>
              <Control><PickButton type="button"><Cursor />1 selected</PickButton><ClearButton type="button" aria-label="Clear selection"><Cross s={22} w={2.4} /></ClearButton></Control>
              <FieldName htmlFor="start">Start</FieldName>
              <DropDown id="start" value="Profile Plane" icon={<I s={36}><path d="M13 2v36" stroke="#1d3a63" strokeWidth="4" /><path d="M15 20h12" stroke="#111" strokeWidth="2" /><path d="M34 20l-8-5v10z" fill="#111" /></I>} />
              <FieldName htmlFor="direction">Direction</FieldName>
              <DropDown id="direction" value="One Side" icon={<I s={36}><path d="M14 2l25 9v18l-25-9z" fill="#f3b283" stroke="#d08850" /><path d="M25 15L5 35" stroke="#4b5a66" strokeWidth="2.500" /><path d="M1 38v-10l9 9z" fill="#4b5a66" /></I>} />
              <FieldName htmlFor="extent">Extent Type</FieldName>
              <DropDown id="extent" value="Distance" icon={<I s={38}><path d="M3 2v36M37 2v36" stroke="#1d3a63" strokeWidth="3.500" /><path d="M8 20h24" stroke="#222" strokeWidth="2" /><path d="M5 20l8-5v10zM35 20l-8-5v10z" fill="#222" /></I>} />
              <FieldName htmlFor="distance">Distance</FieldName>
              <Control><TextField id="distance" defaultValue="Layer_H / 4" /><Fx>fx</Fx></Control>
              <FieldName htmlFor="taper">Taper Angle</FieldName>
              <Control><TextField id="taper" defaultValue="0 deg" /></Control>
            </Fields>
            <Operation>
              <Rule />
              <FieldName htmlFor="operation">Operation</FieldName>
              <DropDown id="operation" value="Join" icon={<I s={36}><path d="M10 2h20v14h8v22H2V16h8z" fill="#66b0e4" stroke="#3f84bb" strokeWidth="1.500" /><path d="M10 16v12h20V16" stroke="#4f97cd" /></I>} />
            </Operation>
            <DialogFoot>
              <svg width="29" height="29" viewBox="0 0 29 29"><circle cx="14.500" cy="14.500" r="14.500" fill="#000" /><path d="M11 12h5v9M10 22h9" stroke="#fff" strokeWidth="3" fill="none" /><circle cx="14.500" cy="7" r="2.200" fill="#fff" /></svg>
              <Spacer />
              <DialogButton type="submit">OK</DialogButton>
              <DialogButton type="button">Cancel</DialogButton>
            </DialogFoot>
          </Dialog>
        </Canvas>

        <Timeline>
          <Playback>
            <button aria-label="Go to start"><svg width="16" height="16" viewBox="0 0 16 16"><path d="M1 1h2v14H1zM14 1v14L3 8z" fill="#555" /></svg></button>
            <button aria-label="Step back"><svg width="16" height="16" viewBox="0 0 16 16"><path d="M11 1v14L0 8zM12 5h3v6h-3z" fill="#555" /></svg></button>
            <button aria-label="Play"><svg width="16" height="18" viewBox="0 0 16 18"><path d="M1 0v18l13-9z" fill="#555" /></svg></button>
            <button aria-label="Step forward"><svg width="16" height="16" viewBox="0 0 16 16"><path d="M4 1v14l11-7zM0 5h3v6H0z" fill="#555" /></svg></button>
            <button aria-label="Go to end"><svg width="16" height="16" viewBox="0 0 16 16"><path d="M12 1h2v14h-2zM1 1v14l11-7z" fill="#555" /></svg></button>
          </Playback>
          <Track>
            <Computed />
            <Steps>{steps.map((s) => <Step key={s.label} $off={s.off} aria-label={s.label}>{s.icon}</Step>)}</Steps>
            <Rail />
          </Track>
          <Marker width="15" height="38" viewBox="0 0 15 38"><path d="M0 0h15v5l-6 6v27H7V11L0 5z" fill="#555" /></Marker>
          <Spacer />
          <Gear s={17} c="#555" />
        </Timeline>
        <Bottom />
      </Frame>

      <Tooltip>Extrude</Tooltip>
      <RedFrame />
      <Callout>Extrude 선택</Callout>
      <Watermark><WatermarkText>22ww.tistory.com</WatermarkText></Watermark>
    </Shell>
  );
}
